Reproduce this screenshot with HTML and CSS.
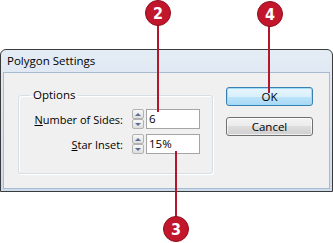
FILE: index.html
```html
<!DOCTYPE html>
<html lang="en">

<head>
    <meta charset="UTF-8">
    <title>Polygon Settings</title>
    <link rel="stylesheet" href="styles.css">
</head>

<body>
    <div class="stage">
        <div class="dialog">
            <div class="titlebar">Polygon Settings</div>
            <div class="client">
                <fieldset class="group">
                    <legend>Options</legend>
                    <div class="row">
                        <label class="label"><u>N</u>umber of Sides:</label>
                        <div class="spin"><span class="spin-up"></span><span class="spin-down"></span></div>
                        <div class="field">6</div>
                    </div>
                    <div class="row">
                        <label class="label"><u>S</u>tar Inset:</label>
                        <div class="spin"><span class="spin-up"></span><span class="spin-down"></span></div>
                        <div class="field">15%</div>
                    </div>
                </fieldset>
                <div class="buttons">
                    <div class="btn btn-default">OK</div>
                    <div class="btn">Cancel</div>
                </div>
            </div>
        </div>

        <!-- callouts -->
        <div class="stem stem-2"></div>
        <div class="badge badge-2">2</div>
        <div class="stem stem-4"></div>
        <div class="badge badge-4">4</div>
        <div class="stem stem-3"></div>
        <div class="badge badge-3">3</div>
    </div>
</body>

</html>
```

FILE: styles.css
```css
* {
    box-sizing: border-box;
}

body {
    margin: 0;
    background: #fff;
    font-family: "Open Sans", "Noto Sans", sans-serif;
    font-size: 11px;
    color: #000;
}

.stage {
    position: relative;
    width: 333px;
    height: 243px;
    overflow: hidden;
}

.dialog {
    margin-top: 49px;
    width: 333px;
    height: 143px;
    border: 1px solid #3b3b3b;
    border-radius: 6px 6px 0 0;
    background: linear-gradient(#e4ecf5, #cddcec);
    padding: 0 2px 2px;
    display: flex;
    flex-direction: column;
}

.titlebar {
    height: 22px;
    line-height: 22px;
    padding-left: 4px;
    font-size: 11.5px;
}

.client {
    flex: 1;
    display: flex;
    gap: 13px;
    padding: 14px 15px 0 14px;
    background: #f0f0f0;
    border: 1px solid #a9bbcf;
}

.group {
    margin: 0;
    width: 195px;
    height: 87px;
    padding: 6px 12px 0 5px;
    border: 1px solid #d5dfe5;
    border-radius: 3px;
    box-shadow: inset 1px 1px 0 #fff, 1px 1px 0 #fff;
}

.group legend {
    margin-left: 6px;
    padding: 0 3px;
    line-height: 16px;
    font-size: 11.5px;
}

.row {
    display: flex;
    align-items: center;
    height: 20px;
    margin-bottom: 5px;
}

.label {
    width: 99px;
    margin-right: 9px;
    text-align: right;
}

.spin {
    width: 12px;
    height: 20px;
    margin-right: 2px;
    display: flex;
    flex-direction: column;
}

.spin span {
    flex: 1;
    display: flex;
    align-items: center;
    justify-content: center;
    border: 1px solid #b2b2b2;
    border-radius: 2px;
    background: linear-gradient(#f8f8f8, #dedede);
}

.spin-up::before,
.spin-down::before {
    content: "";
    border-left: 3px solid transparent;
    border-right: 3px solid transparent;
}

.spin-up::before {
    border-bottom: 3px solid #5a6f98;
}

.spin-down::before {
    border-top: 3px solid #5a6f98;
}

.field {
    width: 54px;
    height: 20px;
    padding-left: 2px;
    line-height: 18px;
    font-size: 11.5px;
    background: #fff;
    border: 1px solid #a5a5a5;
}

.buttons {
    width: 87px;
    display: flex;
    flex-direction: column;
    gap: 11px;
}

.btn {
    height: 19px;
    line-height: 17px;
    text-align: center;
    font-size: 11.5px;
    border: 1px solid #707070;
    border-radius: 3px;
    background: linear-gradient(#f3f3f3 0, #ebebeb 50%, #dddddd 50%, #cfcfcf 100%);
    box-shadow: inset 0 0 0 1px rgba(255, 255, 255, 0.7);
}

.btn-default {
    border-color: #3c7fb1;
    background: linear-gradient(#e9f6fd 0, #d8effc 50%, #bde5fb 50%, #a8d8f3 100%);
    box-shadow: inset 0 0 0 1px #9fdcfa;
}

.badge {
    position: absolute;
    width: 26px;
    height: 26px;
    border-radius: 50%;
    background: #c1162b;
    border: 1px solid #8f0d1c;
    color: #fff;
    font-family: "DejaVu Sans Condensed", "DejaVu Sans", sans-serif;
    font-stretch: condensed;
    font-weight: bold;
    font-size: 16px;
    display: flex;
    align-items: center;
    justify-content: center;
}

.stem {
    position: absolute;
    width: 2px;
    background: #b3172b;
}

.badge-2 {
    left: 145px;
    top: 0;
}

.stem-2 {
    left: 157px;
    top: 20px;
    height: 92px;
}

.badge-4 {
    left: 257px;
    top: 1px;
}

.stem-4 {
    left: 268px;
    top: 20px;
    height: 73px;
}

.badge-3 {
    left: 163px;
    top: 216px;
}

.stem-3 {
    left: 175px;
    top: 151px;
    height: 70px;
}
```
